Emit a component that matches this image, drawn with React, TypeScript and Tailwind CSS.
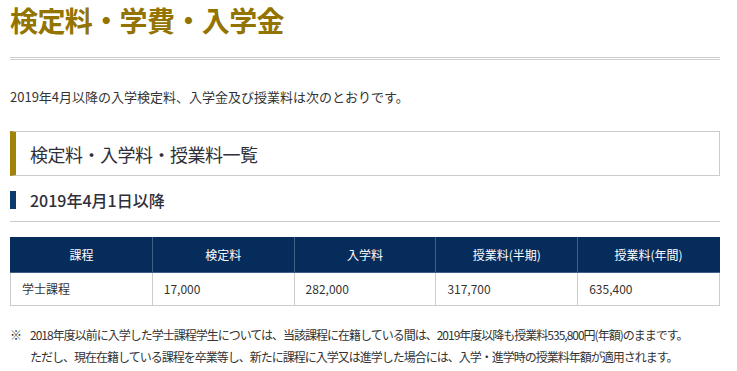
const heads = ['課程', '検定料', '入学料', '授業料(半期)', '授業料(年間)'];
const row = ['学士課程', '17,000', '282,000', '317,700', '635,400'];

export default function App() {
  return (
    <div
      className="w-[737px] h-[371px] overflow-hidden bg-white text-[#333]"
      style={{ fontFamily: "'Noto Sans CJK JP', 'Noto Sans', sans-serif" }}
    >
      <div className="ml-[10px] w-[710px]">
        {/* Page title */}
        <h1 className="text-[28px] leading-[40px] font-bold text-[#937400] tracking-[-0.6px]">
          検定料・学費・入学金
        </h1>
        <div className="mt-[17px] h-[3px] border-y border-[#cfcfcf]" />

        <p className="mt-[27px] text-[13px] leading-[20px] text-[#333]">
          2019年4月以降の入学検定料、入学金及び授業料は次のとおりです。
        </p>

        {/* Section heading */}
        <div className="mt-[24px] h-[45px] flex items-center border border-[#cccccc] border-l-[6px] border-l-[#a08308] pl-[14px]">
          <h2 className="text-[18px] leading-[24px] tracking-[-0.5px] text-[#2f2f3a]">検定料・入学料・授業料一覧</h2>
        </div>

        {/* Sub heading */}
        <div className="mt-[15px] pb-[12px] border-b border-[#cccccc]">
          <div className="flex items-center gap-[14px]">
            <span className="w-[6px] h-[18px] bg-[#0b3a6c]" />
            <h3 className="text-[16px] leading-[18px] font-medium text-[#2f2f3a]">2019年4月1日以降</h3>
          </div>
        </div>

        {/* Fee table */}
        <table className="mt-[15px] w-[710px] border-collapse table-fixed text-[12px]">
          <thead>
            <tr className="bg-[#062c5c] h-[35px]">
              {heads.map((h) => (
                <th
                  key={h}
                  className="border border-[#3f6188] border-t-[#062c5c] first:border-l-[#062c5c] last:border-r-[#062c5c] font-normal text-white text-center"
                >
                  {h}
                </th>
              ))}
            </tr>
          </thead>
          <tbody>
            <tr className="h-[33px]">
              {row.map((c, i) => (
                <td key={i} className="border border-[#cccccc] px-[11px] text-left text-[#333]">
                  {c}
                </td>
              ))}
            </tr>
          </tbody>
        </table>

        {/* Note */}
        <div className="mt-[18px] flex text-[12px] leading-[22px] text-[#333]">
          <span className="w-[20px] shrink-0">※</span>
          <div className="tracking-[-1px] whitespace-nowrap">
            <div>2018年度以前に入学した学士課程学生については、当該課程に在籍している間は、2019年度以降も授業料535,800円(年額)のままです。</div>
            <div>ただし、現在在籍している課程を卒業等し、新たに課程に入学又は進学した場合には、入学・進学時の授業料年額が適用されます。</div>
          </div>
        </div>
      </div>
    </div>
  );
}
